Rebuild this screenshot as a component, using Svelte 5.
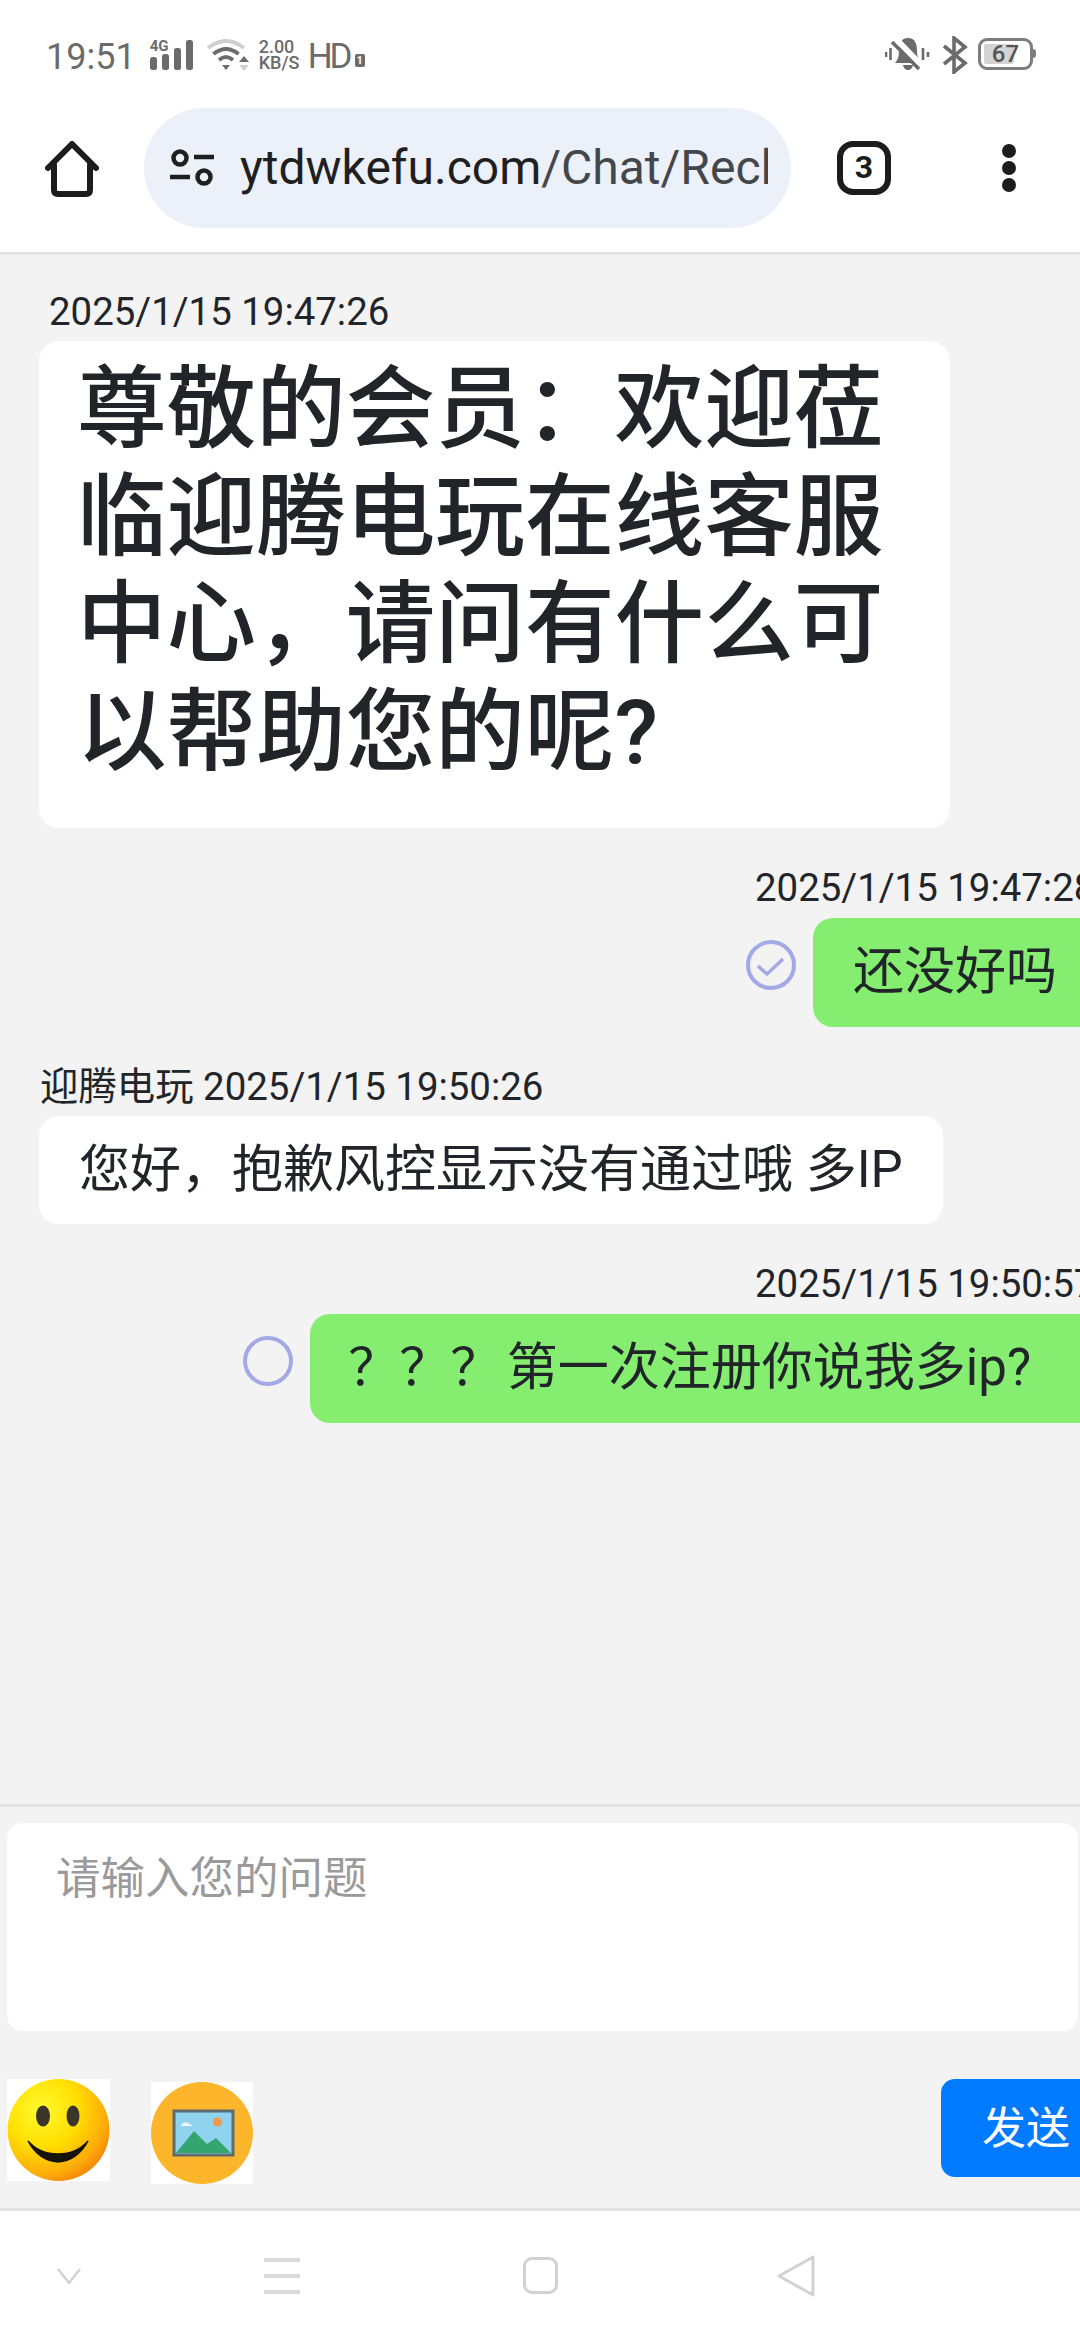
<script>
	const messages = [
		{id: 1, side: 'left', big: true, meta: '2025/1/15 19:47:26', text: '尊敬的会员：欢迎莅临迎腾电玩在线客服中心，请问有什么可以帮助您的呢?'},
		{id: 2, side: 'right', read: true, meta: '2025/1/15 19:47:28', text: '还没好吗'},
		{id: 3, side: 'left', meta: '迎腾电玩 2025/1/15 19:50:26', text: '您好，抱歉风控显示没有通过哦 多IP'},
		{id: 4, side: 'right', read: false, wide: true, meta: '2025/1/15 19:50:57', text: '？？？ 第一次注册你说我多ip?'}
	];
</script>

<main class="page">
	<header class="status">
		<div class="status-left">
			<span class="clock">19:51</span>
			<div class="signal">
				<span class="net">4G</span>
				<svg width="44" height="30" viewBox="0 0 44 30" fill="#6b6b6b">
					<rect x="0" y="17" width="7" height="13" rx="2.5"/>
					<rect x="12" y="14" width="7" height="16" rx="2.5"/>
					<rect x="24" y="8" width="7" height="22" rx="2.5"/>
					<rect x="36" y="0" width="7" height="30" rx="2.5"/>
				</svg>
			</div>
			<svg class="wifi" width="44" height="34" viewBox="0 0 44 34" fill="none" stroke-linecap="butt">
				<path d="M2 10 Q20 -4 38 10" stroke="#cfcfcf" stroke-width="4"/>
				<path d="M7.5 16 Q20 6 32.5 16" stroke="#6b6b6b" stroke-width="4"/>
				<path d="M13 22 Q20 16 27 22" stroke="#6b6b6b" stroke-width="4"/>
				<path d="M16 27 L24 27 L20 32 Z" fill="#6b6b6b"/>
				<path d="M33 24 L43 24 L38 18 Z" fill="#6b6b6b"/>
				<path d="M33 27 L43 27 L38 33 Z" fill="#cfcfcf"/>
			</svg>
			<div class="speed"><span>2.00</span><span>KB/S</span></div>
			<span class="hd">HD</span>
			<span class="sim">1</span>
		</div>
		<div class="status-right">
			<svg width="46" height="36" viewBox="0 0 46 36" fill="#6b6b6b">
				<path d="M10 27 Q14 23 14 15 Q14 2 23 2 Q32 2 32 15 Q32 23 36 27 Z"/>
				<path d="M18 29 h10 q-1 5 -5 5 q-4 0 -5 -5 Z"/>
				<path d="M11 3 L38 31" stroke="#fff" stroke-width="6"/>
				<path d="M7 6 L34 33" stroke="#6b6b6b" stroke-width="3.5"/>
				<path d="M1 16 V21 M5.5 12 V24 M38 12 V24 M43 16 V21" stroke="#6b6b6b" stroke-width="2.6"/>
			</svg>
			<svg width="26" height="38" viewBox="0 0 26 38" fill="none" stroke="#6b6b6b" stroke-width="3.6">
				<path d="M2 10 L23 27 L12 36 V2 L23 11 L2 28"/>
			</svg>
			<div class="battery"><span class="level"></span><span class="pct">67</span></div>
		</div>
	</header>

	<nav class="toolbar">
		<svg class="home" width="54" height="56" viewBox="0 0 54 56" fill="none" stroke="#1c1c1c" stroke-width="6" stroke-linejoin="round" stroke-linecap="round">
			<path d="M3 27 L27 3 L51 27 M9 24 V49 Q9 53 13 53 H41 Q45 53 45 49 V24"/>
		</svg>
		<div class="address">
			<svg width="44" height="38" viewBox="0 0 44 38" fill="none" stroke="#1f1f1f" stroke-width="4.5">
				<circle cx="10" cy="9" r="6.5"/>
				<path d="M24 8 H44 M0 28 H20"/>
				<circle cx="34" cy="28" r="6.5"/>
			</svg>
			<div class="url"><span class="host">ytdwkefu.com</span>/Chat/ReclaimMessages</div>
		</div>
		<div class="tabs">3</div>
		<div class="dots"><i></i><i></i><i></i></div>
	</nav>

	<section class="chat">
		{#each messages as m (m.id)}
			<article class="msg {m.side}" class:big={m.big} class:wide={m.wide}>
				<div class="meta">{m.meta}</div>
				<div class="line">
					{#if m.side === 'right'}
						<svg class="tick" width="52" height="52" viewBox="0 0 52 52" fill="none" stroke="#a3a8e6" stroke-width="4">
							<circle cx="26" cy="26" r="23"/>
							{#if m.read}
								<path d="M13 27 L22 35 L38 20" stroke-width="3.5"/>
							{/if}
						</svg>
					{/if}
					<div class="bubble">{m.text}</div>
				</div>
			</article>
		{/each}
	</section>

	<footer class="composer">
		<div class="input">请输入您的问题</div>
		<div class="tools">
			<svg class="smile" width="103" height="102" viewBox="0 0 103 102">
				<defs>
					<radialGradient id="face" cx="0.33" cy="0.3" r="0.8">
						<stop offset="0" stop-color="#fffa30"/>
						<stop offset="0.45" stop-color="#ffdf00"/>
						<stop offset="0.8" stop-color="#fdab0a"/>
						<stop offset="1" stop-color="#ef7b08"/>
					</radialGradient>
				</defs>
				<rect width="103" height="102" fill="#fff"/>
				<circle cx="51.5" cy="51" r="51" fill="url(#face)"/>
				<ellipse cx="36" cy="37" rx="7" ry="10.5" fill="#3a3528"/>
				<ellipse cx="66" cy="37" rx="6.5" ry="10.5" fill="#3a3528"/>
				<path d="M21 62 Q32 82 51 83 Q70 82 81 62 Q70 75 51 75 Q32 75 21 62 Z" fill="#17130a" stroke="#17130a" stroke-width="1.5"/>
			</svg>
			<svg class="picture" width="102" height="102" viewBox="0 0 102 102">
				<rect width="102" height="102" fill="#fff"/>
				<circle cx="51" cy="51" r="51" fill="#fdb52c"/>
				<rect x="23" y="29" width="59" height="44" fill="#8fd3ef" stroke="#5b6b6e" stroke-width="3"/>
				<circle cx="66.5" cy="40" r="4.5" fill="#f0994a"/>
				<path d="M30 43 q4 -5 8 -1 q3 0 3 2 h-11 Z" fill="#eef8fc"/>
				<path d="M25 71 L43 49 L56 62 L65 56 L80 71 Z" fill="#35a56e"/>
			</svg>
			<button class="send">发送</button>
		</div>
	</footer>

	<div class="sysnav">
		<svg width="24" height="16" viewBox="0 0 24 16" fill="none" stroke="#d2d2d2" stroke-width="2.5"><path d="M1 1 L12 15 L23 1"/></svg>
		<div class="menu"><i></i><i></i><i></i></div>
		<div class="square"></div>
		<svg width="38" height="42" viewBox="0 0 38 42" fill="none" stroke="#d2d2d2" stroke-width="3" stroke-linejoin="round"><path d="M36 2 V40 L2 21 Z"/></svg>
	</div>
</main>

<style>
	:global(body) {
		margin: 0;
		overflow: hidden;
	}

	.page {
		width: 1080px;
		height: 2340px;
		display: flex;
		flex-direction: column;
		overflow: hidden;
		background: #f3f3f3;
		color: #212529;
		font-family: Roboto, "Noto Sans CJK SC", sans-serif;
	}

	.status {
		height: 108px;
		flex: none;
		box-sizing: border-box;
		padding: 35px 46px 0;
		background: #fff;
		display: flex;
		justify-content: space-between;
		align-items: flex-start;
		color: #6b6b6b;
	}

	.status-left, .status-right {
		display: flex;
		align-items: flex-start;
	}

	.clock {
		font-size: 36px;
		line-height: 40px;
		margin-right: 14px;
		margin-top: 2px;
	}

	.signal {
		position: relative;
		margin-top: 5px;
		margin-right: 12px;
		line-height: 0;
	}

	.net {
		position: absolute;
		left: 0;
		top: -1px;
		font-size: 15px;
		line-height: 15px;
		font-weight: 700;
		background: #fff;
		padding-right: 1px;
	}

	.wifi {
		margin-top: 3px;
		margin-right: 9px;
	}

	.speed {
		display: flex;
		flex-direction: column;
		font-size: 18px;
		line-height: 16px;
		font-weight: 500;
		margin-top: 4px;
		margin-right: 8px;
		width: 41px;
	}

	.hd {
		font-size: 35px;
		line-height: 40px;
		letter-spacing: -3px;
		margin-top: 2px;
		margin-right: 3px;
	}

	.sim {
		width: 10px;
		height: 13px;
		margin: 19px 0 0 2px;
		background: #6b6b6b;
		color: #fff;
		font-size: 11px;
		line-height: 13px;
		font-weight: 700;
		text-align: center;
		border-radius: 2px;
	}

	.status-right {
		gap: 11px;
		margin-top: 1px;
		margin-right: 1px;
	}

	.battery {
		position: relative;
		width: 55px;
		height: 32px;
		box-sizing: border-box;
		border: 3px solid #7d7d7d;
		border-radius: 9px;
		margin-top: 2px;
		margin-left: -1px;
	}

	.battery::after {
		content: "";
		position: absolute;
		right: -6px;
		top: 8px;
		width: 3px;
		height: 9px;
		background: #7d7d7d;
		border-radius: 0 3px 3px 0;
	}

	.level {
		position: absolute;
		left: 3px;
		top: 3px;
		bottom: 3px;
		width: 30px;
		background: #d4d4d4;
		border-radius: 2px;
	}

	.pct {
		position: absolute;
		left: 0;
		right: 0;
		top: 0;
		text-align: center;
		font-size: 24px;
		line-height: 26px;
		font-weight: 500;
		color: #555;
	}

	.toolbar {
		height: 144px;
		flex: none;
		background: #fff;
		display: flex;
		align-items: flex-start;
		border-bottom: 3px solid #e2e2e2;
	}

	.home {
		margin: 33px 0 0 45px;
		flex: none;
	}

	.address {
		width: 647px;
		height: 120px;
		margin-left: 45px;
		box-sizing: border-box;
		padding: 0 23px 0 26px;
		background: #ebf0f9;
		border-radius: 60px;
		display: flex;
		align-items: center;
		gap: 26px;
		flex: none;
	}

	.url {
		flex: 1;
		min-width: 0;
		overflow: hidden;
		white-space: nowrap;
		font-size: 48px;
		line-height: 60px;
		color: #44474a;
	}

	.host {
		color: #1f1f1f;
	}

	.tabs {
		width: 54px;
		height: 54px;
		box-sizing: border-box;
		margin: 33px 0 0 46px;
		border: 6px solid #1c1c1c;
		border-radius: 16px;
		font-size: 32px;
		line-height: 41px;
		font-weight: 700;
		text-align: center;
		color: #1c1c1c;
		flex: none;
	}

	.dots {
		margin: 36px 0 0 111px;
		display: flex;
		flex-direction: column;
		gap: 3px;
	}

	.dots i {
		display: block;
		width: 14px;
		height: 14px;
		border-radius: 50%;
		background: #1c1c1c;
	}

	.chat {
		flex: 1;
		min-height: 0;
		overflow: hidden;
		box-sizing: border-box;
		padding-top: 33px;
		border-bottom: 3px solid #e2e2e2;
	}

	.msg {
		margin-bottom: 36px;
	}

	.meta {
		font-size: 38.4px;
		line-height: 48px;
		white-space: nowrap;
	}

	.left .meta {
		padding-left: 40px;
		margin-bottom: 5px;
	}

	.left.big .meta {
		padding-left: 49px;
	}

	.right .meta {
		padding-left: 755px;
		margin-bottom: 6px;
	}

	.line {
		display: flex;
		align-items: flex-start;
	}

	.left .line {
		padding-left: 39px;
	}

	.right .line {
		justify-content: flex-end;
		margin-right: -40px;
	}

	.bubble {
		font-size: 51px;
		line-height: 72px;
		padding: 18px 40px;
		border-radius: 20px;
		background: #fff;
		white-space: nowrap;
	}

	.right .bubble {
		background: #85ee70;
		padding: 18px 63px 19px 40px;
	}

	.right.wide .bubble {
		padding: 18px 89px 19px 38px;
		word-spacing: -7px;
	}

	.big .bubble {
		width: 808px;
		white-space: normal;
		font-size: 89.6px;
		line-height: 107.5px;
		font-weight: 500;
		padding: 15px 65px 42px 38px;
	}

	.tick {
		margin: 21px 16px 0 0;
		flex: none;
	}

	.composer {
		flex: none;
		box-sizing: border-box;
		height: 404px;
		padding: 16px 0 0 7px;
		border-bottom: 3px solid #e2e2e2;
	}

	.input {
		width: 1071px;
		height: 208px;
		box-sizing: border-box;
		padding: 27px 50px 0 49px;
		background: #fff;
		border-radius: 16px;
		font-size: 44.5px;
		line-height: 58px;
		color: #9a9a9a;
	}

	.tools {
		display: flex;
		align-items: flex-start;
		margin-top: 48px;
	}

	.picture {
		margin: 3px 0 0 41px;
	}

	.send {
		margin-left: auto;
		width: 180px;
		height: 98px;
		margin-right: -41px;
		box-sizing: border-box;
		padding: 0 0 6px 41px;
		text-align: left;
		border: 0;
		border-radius: 14px;
		background: #007bff;
		color: #fff;
		font-family: inherit;
		font-size: 44px;
	}

	.sysnav {
		flex: none;
		height: 129px;
		background: #fff;
		display: flex;
		align-items: center;
		padding-left: 57px;
	}

	.menu {
		margin-left: 183px;
		display: flex;
		flex-direction: column;
		gap: 12px;
	}

	.menu i {
		display: block;
		width: 36px;
		height: 4px;
		background: #d9d9d9;
	}

	.square {
		margin-left: 223px;
		width: 35px;
		height: 37px;
		box-sizing: border-box;
		border: 3px solid #d2d2d2;
		border-radius: 9px;
	}

	.sysnav svg:last-child {
		margin-left: 219px;
	}
</style>
